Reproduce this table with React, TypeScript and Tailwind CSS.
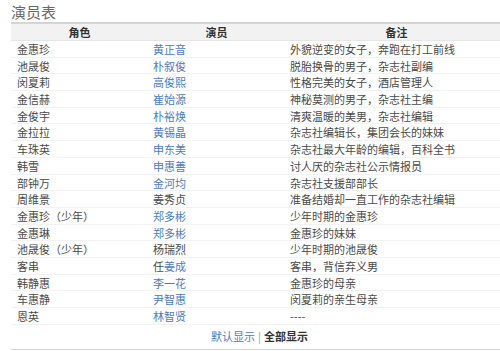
import React from 'react'

type Cast = {
  role: string
  actor: string
  actorPrefix?: string
  linked: boolean
  note: string
}

const cast: Cast[] = [
  { role: '金惠珍', actor: '黄正音', linked: true, note: '外貌逆变的女子，奔跑在打工前线' },
  { role: '池晟俊', actor: '朴叙俊', linked: true, note: '脱胎换骨的男子，杂志社副编' },
  { role: '闵夏莉', actor: '高俊熙', linked: true, note: '性格完美的女子，酒店管理人' },
  { role: '金信赫', actor: '崔始源', linked: true, note: '神秘莫测的男子，杂志社主编' },
  { role: '金俊宇', actor: '朴裕焕', linked: true, note: '清爽温暖的美男，杂志社编辑' },
  { role: '金拉拉', actor: '黄锡晶', linked: true, note: '杂志社编辑长，集团会长的妹妹' },
  { role: '车珠英', actor: '申东美', linked: true, note: '杂志社最大年龄的编辑，百科全书' },
  { role: '韩雪', actor: '申惠善', linked: true, note: '讨人厌的杂志社公示情报员' },
  { role: '部钟万', actor: '金河均', linked: true, note: '杂志社支援部部长' },
  { role: '周维景', actor: '姜秀贞', linked: false, note: '准备结婚却一直工作的杂志社编辑' },
  { role: '金惠珍（少年）', actor: '郑多彬', linked: true, note: '少年时期的金惠珍' },
  { role: '金惠琳', actor: '郑多彬', linked: true, note: '金惠珍的妹妹' },
  { role: '池晟俊（少年）', actor: '杨瑞烈', linked: false, note: '少年时期的池晟俊' },
  { role: '客串', actorPrefix: '任', actor: '姜成', linked: true, note: '客串，背信弃义男' },
  { role: '韩静惠', actor: '李一花', linked: true, note: '金惠珍的母亲' },
  { role: '车惠静', actor: '尹智惠', linked: true, note: '闵夏莉的亲生母亲' },
  { role: '恩英', actor: '林智贤', linked: true, note: '----' },
]

const font = { fontFamily: '"Noto Sans CJK SC", "Liberation Sans", sans-serif' }

export default function App() {
  return (
    <div className="w-[500px] h-[351px] overflow-hidden bg-white text-[#4a4a4a]" style={font}>
      <h2 className="pl-[11px] pt-[3px] h-[22px] text-[15px] leading-[18px] font-normal text-[#6a6a6a]">
        演员表
      </h2>

      <div className="ml-[11px] w-[497px] border-t-2 border-b border-t-[#d4d4d4] border-b-[#d8d8d8]">
        {/* Header */}
        <div className="grid grid-cols-[137px_137px_223px] h-[17px] bg-[#f2f2f2] border-b border-[#e6e6e6] text-[11px] leading-[17px] font-bold text-[#333]">
          <div className="text-center">角色</div>
          <div className="text-center">演员</div>
          <div className="text-center">备注</div>
        </div>

        {cast.map((c, i) => (
          <div
            key={i}
            className="grid grid-cols-[137px_137px_223px] h-[16.7px] border-b border-[#f2f2f2] text-[11px] leading-[16px]"
          >
            <div className="pl-[6px] truncate">{c.role}</div>
            <div className="pl-[5px] truncate">
              {c.actorPrefix && <span>{c.actorPrefix}</span>}
              <span className={c.linked ? 'text-[#4b7cc0]' : ''}>{c.actor}</span>
            </div>
            <div className="pl-[5px] truncate">{c.note}</div>
          </div>
        ))}

        {/* Footer */}
        <div className="h-[24px] flex items-center justify-center text-[11px]">
          <span className="text-[#4b7cc0]">默认显示</span>
          <span className="mx-[3px] text-[#999]">|</span>
          <span className="font-bold text-[#333]">全部显示</span>
        </div>
      </div>
    </div>
  )
}
